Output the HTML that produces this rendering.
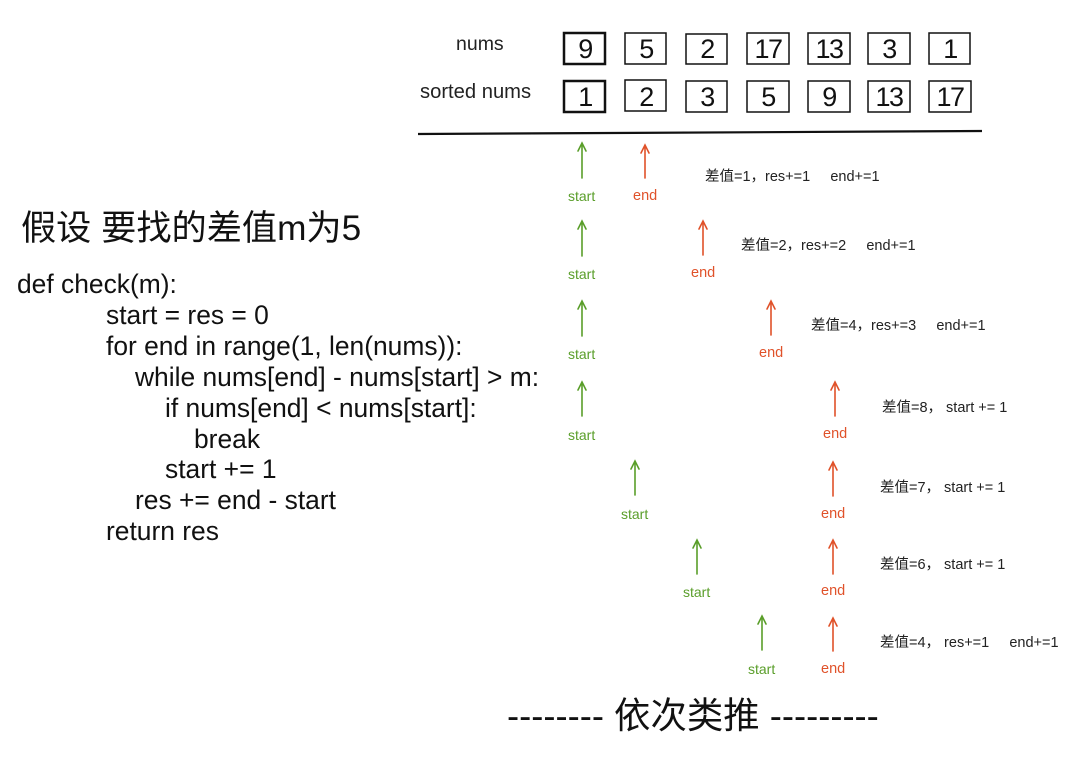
<!DOCTYPE html>
<html><head><meta charset="utf-8"><style>
body{margin:0;width:1083px;height:758px;background:#fff;position:relative;overflow:hidden;font-family:"Liberation Sans","Noto Sans CJK SC",sans-serif;}
.t{position:absolute;white-space:nowrap;line-height:1;}
.c{font-size:26.4px;color:#111;}
.g{color:#5a9e2a;font-size:14px;}
.o{color:#e0522a;font-size:14.5px;}
.n{font-size:14.5px;color:#222;}
.d{position:absolute;line-height:1;font-family:"Liberation Sans",sans-serif;font-size:27px;color:#111;width:42px;text-align:center;letter-spacing:-1.5px;}
</style></head><body>
<svg width="1083" height="758" style="position:absolute;left:0;top:0">
<g fill="none" stroke="#111" stroke-width="2">
<rect x="564" y="33" width="41" height="31" stroke-width="2.5"/>
<rect x="625" y="33" width="41" height="31" stroke-width="1.5"/>
<rect x="686" y="34" width="41" height="30" stroke-width="1.5"/>
<rect x="747" y="33" width="42" height="31" stroke-width="1.5"/>
<rect x="808" y="33" width="42" height="31" stroke-width="1.5"/>
<rect x="868" y="33" width="42" height="31" stroke-width="1.5"/>
<rect x="929" y="33" width="41" height="31" stroke-width="1.5"/>
<rect x="564" y="81" width="41" height="31" stroke-width="2.5"/>
<rect x="625" y="80" width="41" height="31" stroke-width="1.5"/>
<rect x="686" y="81" width="41" height="31" stroke-width="1.5"/>
<rect x="747" y="81" width="42" height="31" stroke-width="1.5"/>
<rect x="808" y="81" width="42" height="31" stroke-width="1.5"/>
<rect x="868" y="81" width="42" height="31" stroke-width="1.5"/>
<rect x="929" y="81" width="42" height="31" stroke-width="1.5"/>
<line x1="418" y1="134" x2="982" y2="131" stroke-width="2.2"/>
</g>
<g fill="none" stroke-width="1.6" stroke-linecap="round">
<g stroke="#5a9e2a">
<path d="M582 143V178M578 151L582 143L586 151"/>
<path d="M582 221V256M578 229L582 221L586 229"/>
<path d="M582 301V336M578 309L582 301L586 309"/>
<path d="M582 382V416M578 390L582 382L586 390"/>
<path d="M635 461V495M631 469L635 461L639 469"/>
<path d="M697 540V574M693 548L697 540L701 548"/>
<path d="M762 616V650M758 624L762 616L766 624"/>
</g>
<g stroke="#e0522a">
<path d="M645 145V178M641 153L645 145L649 153"/>
<path d="M703 221V255M699 229L703 221L707 229"/>
<path d="M771 301V335M767 309L771 301L775 309"/>
<path d="M835 382V416M831 390L835 382L839 390"/>
<path d="M833 462V496M829 470L833 462L837 470"/>
<path d="M833 540V574M829 548L833 540L837 548"/>
<path d="M833 618V651M829 626L833 618L837 626"/>
</g></g>
</svg>
<div class="t" style="left:456px;top:35px;font-size:19.5px;color:#222">nums</div>
<div class="t" style="left:420px;top:82px;font-size:20.2px;color:#222">sorted nums</div>
<div class="d" style="top:36px;left:564px">9</div>
<div class="d" style="top:36px;left:625px">5</div>
<div class="d" style="top:36px;left:686px">2</div>
<div class="d" style="top:36px;left:747px">17</div>
<div class="d" style="top:36px;left:808px">13</div>
<div class="d" style="top:36px;left:868px">3</div>
<div class="d" style="top:36px;left:929px">1</div>
<div class="d" style="top:84px;left:564px">1</div>
<div class="d" style="top:84px;left:625px">2</div>
<div class="d" style="top:84px;left:686px">3</div>
<div class="d" style="top:84px;left:747px">5</div>
<div class="d" style="top:84px;left:808px">9</div>
<div class="d" style="top:84px;left:868px">13</div>
<div class="d" style="top:84px;left:929px">17</div>

<div class="t g" style="left:568px;top:189px">start</div><div class="t o" style="left:633px;top:189px">end</div>
<div class="t n" style="left:705px;top:170px">差值=1，res+=1&nbsp;&nbsp;&nbsp;&nbsp; end+=1</div>
<div class="t g" style="left:568px;top:267px">start</div><div class="t o" style="left:691px;top:266px">end</div>
<div class="t n" style="left:741px;top:239px">差值=2，res+=2&nbsp;&nbsp;&nbsp;&nbsp; end+=1</div>
<div class="t g" style="left:568px;top:347px">start</div><div class="t o" style="left:759px;top:346px">end</div>
<div class="t n" style="left:811px;top:319px">差值=4，res+=3&nbsp;&nbsp;&nbsp;&nbsp; end+=1</div>
<div class="t g" style="left:568px;top:428px">start</div><div class="t o" style="left:823px;top:427px">end</div>
<div class="t n" style="left:882px;top:401px">差值=8， start += 1</div>
<div class="t g" style="left:621px;top:507px">start</div><div class="t o" style="left:821px;top:507px">end</div>
<div class="t n" style="left:880px;top:481px">差值=7， start += 1</div>
<div class="t g" style="left:683px;top:585px">start</div><div class="t o" style="left:821px;top:584px">end</div>
<div class="t n" style="left:880px;top:558px">差值=6， start += 1</div>
<div class="t g" style="left:748px;top:662px">start</div><div class="t o" style="left:821px;top:662px">end</div>
<div class="t n" style="left:880px;top:636px">差值=4， res+=1&nbsp;&nbsp;&nbsp;&nbsp; end+=1</div>

<div class="t" style="left:21px;top:211px;font-size:35.2px;color:#111">假设 要找的差值m为5</div>
<div class="t c" style="left:17px;top:271px">def check(m):</div>
<div class="t c" style="left:106px;top:302px">start = res = 0</div>
<div class="t c" style="left:106px;top:333px">for end in range(1, len(nums)):</div>
<div class="t c" style="left:135px;top:364px">while nums[end] - nums[start] &gt; m:</div>
<div class="t c" style="left:165px;top:395px">if nums[end] &lt; nums[start]:</div>
<div class="t c" style="left:194px;top:426px">break</div>
<div class="t c" style="left:165px;top:456px">start += 1</div>
<div class="t c" style="left:135px;top:487px">res += end - start</div>
<div class="t c" style="left:106px;top:518px">return res</div>
<div class="t" style="left:507px;top:698px;font-size:36.4px;color:#111">-------- 依次类推 ---------</div>
</body></html>
